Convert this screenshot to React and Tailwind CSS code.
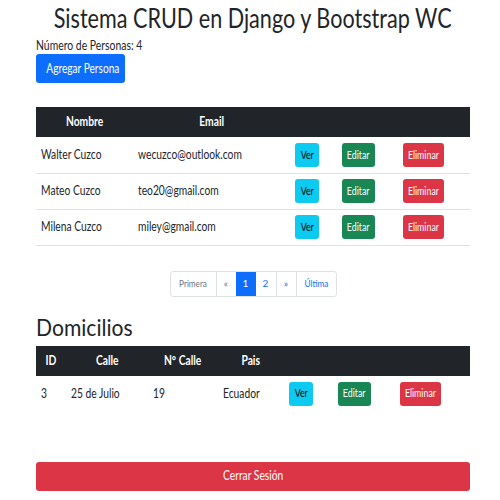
import React from 'react';

const personas = [
  { nombre: 'Walter Cuzco', email: 'wecuzco@outlook.com' },
  { nombre: 'Mateo Cuzco', email: 'teo20@gmail.com' },
  { nombre: 'Milena Cuzco', email: 'miley@gmail.com' },
];

// the screenshot's type is narrow, so texts get squeezed horizontally
function T({ children, center, s = 'scale-x-[0.79]' }) {
  return (
    <span className={`inline-block whitespace-nowrap ${s} ${center ? 'origin-center' : 'origin-left'}`}>
      {children}
    </span>
  );
}

function Acciones() {
  return (
    <>
      <td className="pl-[5px]">
        <button className="flex h-6 w-6 items-center justify-center rounded-[3px] bg-[#0dcaf0] text-[11px] text-black"><T center s="scale-x-[0.8]">Ver</T></button>
      </td>
      <td className="pl-[5px]">
        <button className="flex h-6 w-[33px] items-center justify-center rounded-[3px] bg-[#198754] text-[11px] text-white"><T center s="scale-x-[0.8]">Editar</T></button>
      </td>
      <td className="pl-[5px]">
        <button className="flex h-6 w-[41px] items-center justify-center rounded-[3px] bg-[#dc3545] text-[11px] text-white"><T center s="scale-x-[0.8]">Eliminar</T></button>
      </td>
    </>
  );
}

export default function App() {
  return (
    <div className="min-h-screen overflow-hidden bg-white text-[#212529] font-['Lato',sans-serif]">
      <div className="mx-[36px] w-[434px]">
        <h1 className="flex justify-center pt-[2px] text-[27px] leading-[32px]"><T center s="scale-x-[0.8]">Sistema CRUD en Django y Bootstrap WC</T></h1>
        <p className="mt-[4px] text-[13px] leading-[14px]"><T s="scale-x-[0.8]">Número de Personas: 4</T></p>
        <button className="mt-[2px] h-[29px] w-[89px] rounded-[3px] bg-[#0d6efd] text-[13px] text-white"><T center s="scale-x-[0.78]">Agregar Persona</T></button>

        <table className="mt-[24px] w-full border-collapse table-fixed text-[13px]">
          <colgroup>
            <col className="w-[98px]" />
            <col className="w-[156px]" />
            <col className="w-[47px]" />
            <col className="w-[61px]" />
            <col className="w-[72px]" />
          </colgroup>
          <thead>
            <tr className="h-[30px] bg-[#212529] text-white font-bold">
              <th className="text-center"><T center>Nombre</T></th>
              <th className="text-center"><T center>Email</T></th>
              <th></th>
              <th></th>
              <th></th>
            </tr>
          </thead>
          <tbody>
            {personas.map((p) => (
              <tr key={p.email} className="h-[36px] border-b border-[#dee2e6]">
                <td className="pl-[5px]"><T>{p.nombre}</T></td>
                <td className="pl-[4px]"><T>{p.email}</T></td>
                <Acciones />
              </tr>
            ))}
          </tbody>
        </table>

        <div className="mt-[25px] flex justify-center">
          <nav className="flex h-[26px] rounded-[3px] border border-[#dee2e6] text-[10px]">
            <span className="flex w-[45px] items-center justify-center text-[#6c757d]"><T center s="scale-x-[0.82]">Primera</T></span>
            <span className="flex w-[20px] items-center justify-center border-l border-[#dee2e6] text-[#6c757d]">«</span>
            <span className="flex w-[20px] items-center justify-center bg-[#0d6efd] text-white">1</span>
            <span className="flex w-[20px] items-center justify-center text-[#0d6efd]">2</span>
            <span className="flex w-[20px] items-center justify-center border-l border-[#dee2e6] text-[#0d6efd]">»</span>
            <span className="flex w-[40px] items-center justify-center border-l border-[#dee2e6] text-[#0d6efd]"><T center s="scale-x-[0.82]">Última</T></span>
          </nav>
        </div>

        <h2 className="mt-[15px] text-[24px] leading-[30px]"><T s="scale-x-[0.88]">Domicilios</T></h2>
        <table className="mt-[4px] w-full border-collapse table-fixed text-[13px]">
          <colgroup>
            <col className="w-[30px]" />
            <col className="w-[82px]" />
            <col className="w-[70px]" />
            <col className="w-[66px]" />
            <col className="w-[49px]" />
            <col className="w-[62px]" />
            <col className="w-[75px]" />
          </colgroup>
          <thead>
            <tr className="h-[30px] bg-[#212529] text-white font-bold">
              <th className="text-center"><T center>ID</T></th>
              <th className="text-center"><T center>Calle</T></th>
              <th className="text-center"><T center>N° Calle</T></th>
              <th className="text-center"><T center>Pais</T></th>
              <th></th>
              <th></th>
              <th></th>
            </tr>
          </thead>
          <tbody>
            <tr className="h-[36px]">
              <td className="pl-[5px]"><T>3</T></td>
              <td className="pl-[5px]"><T>25 de Julio</T></td>
              <td className="pl-[5px]"><T>19</T></td>
              <td className="pl-[5px]"><T>Ecuador</T></td>
              <Acciones />
            </tr>
          </tbody>
        </table>

        <button className="mt-[50px] h-[29px] w-full rounded-[3px] bg-[#dc3545] text-[13px] text-white"><T center>Cerrar Sesión</T></button>
      </div>
    </div>
  );
}
